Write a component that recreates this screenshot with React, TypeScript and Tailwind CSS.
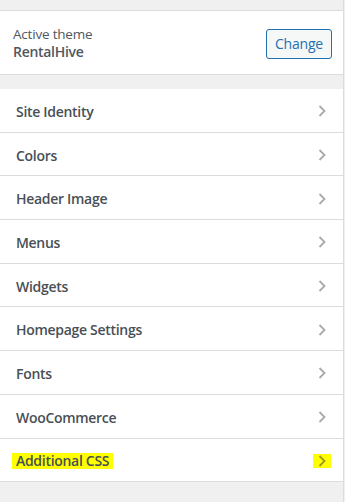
const sections = [
  "Site Identity",
  "Colors",
  "Header Image",
  "Menus",
  "Widgets",
  "Homepage Settings",
  "Fonts",
  "WooCommerce",
];

function Chevron({ color = "#a7aaad" }: { color?: string }) {
  return (
    <svg width="10" height="14" viewBox="0 0 10 14">
      <path d="M2.5 2 L7.5 7 L2.5 12" fill="none" stroke={color} strokeWidth="1.8" />
    </svg>
  );
}

export default function App() {
  return (
    <div
      className="w-[345px] h-[502px] bg-[#f0f0f1] overflow-hidden"
      style={{ fontFamily: '"Open Sans", "Noto Sans", sans-serif' }}
    >
      <div className="w-[344px] h-full border-r border-[#dcdcde] pt-[10px]">
        {/* active theme */}
        <div className="h-[65px] bg-white border-y border-[#dcdcde] flex items-center justify-between pl-[13px] pr-[11px]">
          <div className="leading-[17px] pt-[1px]">
            <p className="text-[13.5px] text-[#50575e] tracking-[-0.2px]">Active theme</p>
            <p className="text-[14px] font-semibold text-[#50575e] tracking-[-0.3px]">RentalHive</p>
          </div>
          <button className="h-[30px] w-[66px] mt-[2px] rounded-[3px] border border-[#2271b1] bg-[#f6f7f7] text-[#2271b1] text-[14px] tracking-[-0.2px]">
            Change
          </button>
        </div>

        <div className="h-[14px]" />

        {/* sections */}
        <ul className="bg-white">
          {sections.map((s) => (
            <li
              key={s}
              className="h-[43.7px] border-b border-[#dcdcde] flex items-center justify-between pl-[16px] pr-[16px] pt-[2px]"
            >
              <span className="text-[14px] font-semibold text-[#484f56] tracking-[-0.3px]">{s}</span>
              <Chevron />
            </li>
          ))}
          <li className="h-[43.7px] border-b border-[#dcdcde] flex items-center justify-between pl-[12px] pr-[12px] pt-[2px]">
            <span className="bg-[#ffff00] px-[4px] leading-[16px] text-[14px] font-semibold text-[#484f56] tracking-[-0.3px]">
              Additional CSS
            </span>
            <span className="bg-[#ffff00] px-[4px] h-[14px] flex items-center">
              <Chevron color="#9a9a20" />
            </span>
          </li>
        </ul>
      </div>
    </div>
  );
}
